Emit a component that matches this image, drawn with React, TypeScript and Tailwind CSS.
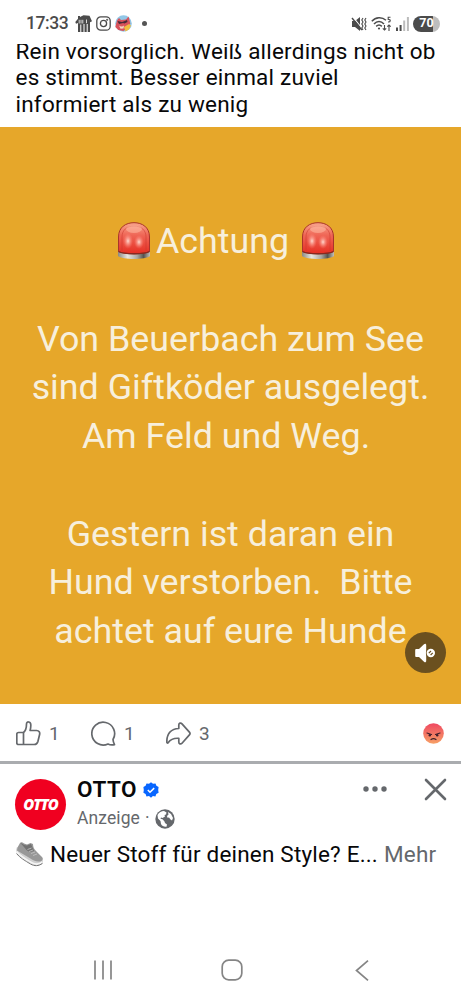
interface IconProps {
  className?: string;
}

const postLines = [
  'Rein vorsorglich. Weiß allerdings nicht ob',
  'es stimmt. Besser einmal zuviel',
  'informiert als zu wenig',
];

const warningLines = [
  '',
  'Von Beuerbach zum See',
  'sind Giftköder ausgelegt.',
  'Am Feld und Weg. ',
  '',
  'Gestern ist daran ein',
  'Hund verstorben.  Bitte',
  'achtet auf eure Hunde',
];

function Siren({ className }: IconProps) {
  return (
    <svg className={className} viewBox="0 0 34 38" fill="none">
      <defs>
        <linearGradient id="dome" x1="0" y1="0" x2="0" y2="1">
          <stop offset="0" stopColor="#f9a58c" />
          <stop offset="0.4" stopColor="#ef6656" />
          <stop offset="1" stopColor="#e62e23" />
        </linearGradient>
        <linearGradient id="base" x1="0" y1="0" x2="1" y2="0">
          <stop offset="0" stopColor="#8b8982" />
          <stop offset="0.3" stopColor="#e8e6e1" />
          <stop offset="0.6" stopColor="#aaa8a2" />
          <stop offset="0.8" stopColor="#55534f" />
          <stop offset="1" stopColor="#c4c1ba" />
        </linearGradient>
        <radialGradient id="glow">
          <stop offset="0" stopColor="#ffd9cf" />
          <stop offset="1" stopColor="#ff8273" stopOpacity="0" />
        </radialGradient>
      </defs>
      <path d="M1 29v5c4 4 28 4 32 0v-5z" fill="url(#base)" />
      <path d="M1.500 29.500V15C1.500 5 9 .7 17 .7S32.500 5 32.500 15v14.500c-5 3-26 3-31 0z" fill="url(#dome)" stroke="#a9342a" strokeWidth="1" />
      <path d="M5 29V15c0-7 5-11 12-11s12 4 12 11v14" stroke="#c9362c" strokeOpacity=".5" />
      <ellipse cx="17" cy="7" rx="8" ry="4" fill="#ffc0a8" fillOpacity=".5" />
      <ellipse cx="11" cy="19" rx="5" ry="8" fill="url(#glow)" />
      <ellipse cx="22" cy="20" rx="5" ry="7" fill="url(#glow)" />
      <path d="M1.500 29.500c5 3 26 3 31 0" stroke="#87291f" strokeWidth="1.300" />
    </svg>
  );
}

function StatusBar() {
  return (
    <div className="flex h-11 shrink-0 items-center pr-[21px] pl-[26px] pt-[3px] text-[#4b4b4b]">
      <span className="w-[42px] text-[17.500px] leading-none font-medium tracking-[-0.4px]">17:33</span>

      {/* Notifications */}
      <svg className="ml-[7px] h-[17px] w-[17px]" viewBox="0 0 17 17" fill="currentColor">
        <path d="M.3 7 3 3.800V1h2v1L8.500.3 14.500.8 17 6.300l-2 .9V17h-2.300V9h-1v8H9.500V9h-1v8H6.300V9.500h-1V17H3V8l-2 .7z" />
        <path d="M4.200 4.800v3.700M6 4.800v3.700M7.800 4.800v3.700M11.500 8.200V4.500" stroke="#fff" strokeWidth=".8" fill="none" />
      </svg>
      <svg className="ml-[4px] h-[15px] w-[15px]" viewBox="0 0 15 15" fill="none" stroke="currentColor" strokeWidth="1.300">
        <rect x=".8" y=".8" width="13.400" height="13.400" rx="4" />
        <circle cx="7.500" cy="7.500" r="3.100" />
        <circle cx="11.200" cy="3.800" r=".4" />
      </svg>
      <svg className="ml-[4px] h-[17px] w-[17px]" viewBox="0 0 17 17">
        <circle cx="8.500" cy="8.500" r="8.300" fill="#91c7e7" />
        <path d="M2 5.500 4 3l2 2 5-.5 2.500-3 .8 3 1 4-3 5-4 2.500-5-1-3-3z" fill="#d9525b" />
        <path d="m2.500 6 4.500 1 1.500-.5 3.500-1.500.5 2-3 1.500L8 8 4 9z" fill="#482a36" />
        <path d="M4 10.500c2 1.500 4 1 5 0l-.5 3-3 .3z" fill="#f4d7c1" />
        <path d="m9 12 5-3 2 1.500-2 4-3.500 2z" fill="#f1bd40" />
      </svg>
      <span className="ml-[10px] h-[5px] w-[5px] rounded-full bg-[#555]" />

      {/* System state */}
      <svg className="ml-auto h-[16px] w-[17px]" viewBox="0 0 17 16" fill="none" stroke="currentColor" strokeWidth="1.400">
        <path d="M1 5h3l5-4v14l-5-4H1z" fill="currentColor" stroke="none" />
        <path d="M2 1 12 13.500" stroke="#fff" strokeWidth="1.200" />
        <path d="M1 2 10.800 14" />
        <path d="m12 2-1.200 2L12 6l-1.200 2L12 10l-1.200 2L12 14M15 2l-1.200 2L15 6l-1.200 2L15 10l-1.200 2L15 14" strokeWidth="1.100" />
      </svg>
      <svg className="ml-[3px] h-[16px] w-[21px]" viewBox="0 0 21 16" fill="none" stroke="currentColor" strokeWidth="1.500">
        <path d="M.8 5.200C4.800.8 11 .8 15 4.200M3 8c3-3.200 7-3.200 10 0M5.200 10.400c1.800-1.800 3.800-1.800 5.600 0" />
        <circle cx="8" cy="12.500" r="1.100" fill="currentColor" stroke="none" />
        <path d="M19.500 1.200h-2.300v2.200c2.800-.3 2.800 2.700-.2 2.600M13.500 9v5m-1.700-1.700L13.500 14l1.700-1.700M18 15V9m-1.700 1.700L18 9l1.700 1.700" strokeWidth="1.100" />
      </svg>
      <svg className="ml-[4px] h-[14px] w-[13px]" viewBox="0 0 13 14" fill="currentColor">
        <path d="M0 10.500h2V14H0zM3.600 8h2v6h-2z" />
        <path d="M7.200 3.500h2V14h-2zM10.900 0h2v14h-2z" fill="#bbb" />
      </svg>
      <div className="ml-[4px] flex h-4 w-[27px] items-center justify-center rounded-full bg-linear-to-r from-[#4b4b4b] from-75% to-[#bdbdbd] to-75% text-[12.500px] leading-none font-bold text-white">
        70
      </div>
    </div>
  );
}

function PostActions() {
  return (
    <div className="flex h-[57px] shrink-0 items-center pr-[17px] pl-4 pt-px text-[19px] leading-none tracking-[0.2px] text-[#65686c]">
      <div className="flex w-[75px] items-center gap-2">
        <svg className="h-[25px] w-[25px]" viewBox="0 0 25 25" fill="none" stroke="currentColor" strokeWidth="1.700" strokeLinejoin="round">
          <path d="M7.500 11.500c2.500-2 3-4.500 3-8.500 0-3 4.100-2.600 4.300.7.100 2-.2 3.800-.7 5.800h6.500c2.500 0 3.500 1.800 3 4l-1.700 7c-.6 2.200-1.500 3-3.700 3H7.500M2.500 11.500h5v12h-5c-1 0-1.700-.6-1.700-1.600v-8.800c0-1 .7-1.600 1.700-1.600z" />
        </svg>
        <span>1</span>
      </div>
      <div className="flex w-[75px] items-center gap-2">
        <svg className="h-[25px] w-[25px]" viewBox="0 0 25 25" fill="none" stroke="currentColor" strokeWidth="1.700" strokeLinejoin="round">
          <path d="M22 18.500A11.400 11.400 0 1 0 17 23c1.800 1 4 1.200 6.500.7-.8-1.500-1.300-3-1.500-5.200z" />
        </svg>
        <span>1</span>
      </div>
      <div className="flex items-center gap-2">
        <svg className="h-[25px] w-[25px]" viewBox="0 0 25 25" fill="none" stroke="currentColor" strokeWidth="1.700" strokeLinejoin="round">
          <path d="M12.800 7.500V4c0-2 1.900-2.600 3.200-1.200l7.400 8.300c.8.900.8 1.900 0 2.800L16 22.200c-1.300 1.400-3.200.8-3.200-1.200v-3.700c-4.500-.3-8.300 1-10.500 4.200-.6.900-1.500.6-1.500-.5C.8 13 5 8 12.800 7.500z" />
        </svg>
        <span>3</span>
      </div>

      {/* Angry reaction */}
      <svg className="ml-auto h-[21px] w-[21px]" viewBox="0 0 21 21" fill="none">
        <defs>
          <linearGradient id="angry" x1="0" y1="0" x2="0" y2="1">
            <stop stopColor="#ef4861" />
            <stop offset="1" stopColor="#f7a066" />
          </linearGradient>
        </defs>
        <circle cx="10.500" cy="10.500" r="10.300" fill="url(#angry)" />
        <path d="m4 10 4.500 1.500M17 10l-4.500 1.500M8 16.500c1.600-1 3.400-1 5 0" stroke="#40202c" strokeWidth="1.200" strokeLinecap="round" />
        <circle cx="6.800" cy="12.300" r="1.200" fill="#40202c" />
        <circle cx="14.200" cy="12.300" r="1.200" fill="#40202c" />
      </svg>
    </div>
  );
}

function AdHeader() {
  return (
    <div className="flex h-[75px] shrink-0 pl-[15px]">
      <div className="mt-[15px] flex h-[51px] w-[51px] items-center justify-center rounded-full bg-[#f00020] font-['Open_Sans',sans-serif] text-[15px] leading-none font-extrabold tracking-[-1.1px] text-white italic">
        OTTO
      </div>
      <div className="ml-[11px] pt-[12px]">
        <div className="flex h-[27px] items-center gap-[6px]">
          <span className="text-[22.500px] leading-[27px] font-semibold tracking-[0.500px] text-[#080809]">OTTO</span>
          <svg className="h-[16px] w-[16px]" viewBox="0 0 16 16">
            <path d="m8 .2 2 1.500 2.500-.3.900 2.400 2.200 1.200L15.200 8l.4 2.800-2.300 1.100-.9 2.600-2.500-.4L8 15.800l-2-1.700-2.500.4-.9-2.600-2.200-1.100L.8 8 .4 5l2.200-1.200.9-2.400 2.500.3z" fill="#0866ff" />
            <path d="m4.800 8 2.200 2.300 4.200-4.200" fill="none" stroke="#fff" strokeWidth="1.500" />
          </svg>
        </div>
        <div className="mt-[2px] flex h-[28px] items-center text-[17.500px] leading-none text-[#65686c]">
          <span className="tracking-[0.1px]">Anzeige</span>
          <span className="ml-[5px]">·</span>
          <svg className="ml-[5px] h-5 w-5" viewBox="0 0 20 20">
            <circle cx="10" cy="10" r="9.700" fill="#65686c" />
            <path d="M2.500 6C4 3.300 6.500 2 9 2l2.500 1.500L11 5.500 9.500 6l.5 1.500L7.500 9 6 8.500l-.5 1.300 2 .4 2 2.300.5 1.500 2 1.500-.5 2.200c-2.500.3-4.500-.7-5.500-2.700l-.5-3L3 9.500z" fill="#fff" />
            <path d="m13 3 3 2 2 4-1 2.500-1.500-1-1.500-2-1.500.3-.5-1.800 1.500-1.500z" fill="#fff" />
          </svg>
        </div>
      </div>
      <svg className="mt-[22px] ml-auto h-[6px] w-[24px]" viewBox="0 0 24 6" fill="#65686c">
        <circle cx="3" cy="3" r="2.700" />
        <circle cx="12" cy="3" r="2.700" />
        <circle cx="21" cy="3" r="2.700" />
      </svg>
      <svg className="mt-[14px] mr-[14px] ml-[37px] h-[23px] w-[23px]" viewBox="0 0 23 23" fill="none" stroke="#65686c" strokeWidth="2.600" strokeLinecap="round">
        <path d="m2 2 19 19M21 2 2 21" />
      </svg>
    </div>
  );
}

function AdText() {
  return (
    <div className="flex h-[30px] shrink-0 items-center pl-[15px] text-[22.500px] leading-[30px] whitespace-nowrap text-[#080809]">
      <svg className="h-[26px] w-[29px]" viewBox="0 0 29 26">
        <path d="M2 6c-1.500 3-1 6 1.500 8l12 8.500c4 2.500 9 3 12 0l.5-3L15 16z" fill="#cfcfcf" />
        <path d="M2.500 6.500 5 2c1-1.500 3-.5 4 .5l3 1L15.500 2l2.500 1c0 3 1 5 3 7l5.500 5.500c2 1.700 1.700 4-.5 4.700-4 .8-8-.5-11-3L2 9.500z" fill="#989898" />
        <path d="m5.500 2 6 7c2 2 4.500 2.200 7.500 1l-3-7-4 1.500C10 4.500 8 3 5.500 2z" fill="#727272" />
        <path d="m12.500 8.500 4-1.500M14 10.500l4-1.500M16 12.500l4-1.500M18 14.500l4-1.500" stroke="#c6c6c6" strokeWidth=".8" />
        <path d="M1.500 10.500c4 5 10 8 14 10.500s8 3 12-.2" fill="none" stroke="#f5f5f5" strokeWidth="1.700" />
        <path d="M1.500 12.500c3 4 9 7.500 14 10.500 4 2.300 8 2.300 12-.7" fill="none" stroke="#777" />
      </svg>
      <span className="ml-[6px] tracking-[0.190px]">Neuer Stoff für deinen Style? E...</span>
      <span className="ml-[6px] tracking-[0.200px] text-[#65686c]">Mehr</span>
    </div>
  );
}

function NavigationBar() {
  return (
    <div className="mt-auto flex h-[60px] shrink-0 items-center pl-[93px]">
      <svg className="h-[20px] w-[20px]" viewBox="0 0 20 20" stroke="#858585" strokeWidth="1.700">
        <path d="M2 .5v19M10 .5v19M18 .5v19" />
      </svg>
      <svg className="ml-[108px] h-[22px] w-[22px]" viewBox="0 0 22 22" fill="none" stroke="#858585" strokeWidth="1.700">
        <rect x="1.200" y="1.200" width="19.600" height="19.600" rx="6.500" />
      </svg>
      <svg className="ml-[112px] h-[21px] w-[14px]" viewBox="0 0 14 21" fill="none" stroke="#858585" strokeWidth="1.700">
        <path d="M13 .7 1.500 10.500 13 20.300" />
      </svg>
    </div>
  );
}

export default function App() {
  return (
    <div className="flex h-[1000px] w-[461px] flex-col overflow-hidden bg-white font-['Roboto',sans-serif]">
      <StatusBar />

      <div className="h-[83px] shrink-0 overflow-hidden pl-[15.500px] text-[22.500px] leading-[26.500px] tracking-[0.220px] whitespace-nowrap text-[#080809]">
        <div className="-mt-[6.500px]">
          {postLines.map((line) => (
            <p key={line}>{line}</p>
          ))}
        </div>
      </div>

      <div className="relative h-[577px] shrink-0 bg-[#e6a72a] pt-[90px] text-center text-[35.800px] leading-[48.750px] whitespace-pre text-[#f7efdc]">
        <div className="flex h-[48.750px] items-center pl-[117px]">
          <Siren className="h-[38px] w-[34px]" />
          <span className="ml-[5px]">Achtung</span>
          <Siren className="ml-[12px] h-[38px] w-[34px]" />
        </div>
        {warningLines.map((line, index) => (
          <p key={index} className="h-[48.750px]">{line}</p>
        ))}
        <button className="absolute right-[15px] bottom-[31px] flex h-[41px] w-[41px] items-center justify-center rounded-full bg-[#6b501f]">
          <svg className="h-[20px] w-[21px]" viewBox="0 0 21 20" fill="#fff">
            <path d="M1.500 6H4l5-4.700c1.200-1 2.200-.5 2.200 1v15.400c0 1.500-1 2-2.200 1L4 14H1.500C.6 14 .2 13.500.2 12.700V7.300C.2 6.500.6 6 1.500 6z" />
            <circle cx="15.800" cy="10" r="4.900" fill="#6b501f" />
            <circle cx="15.800" cy="10" r="4.200" />
            <path d="m13.800 10.200 2.200-2.200M15.600 12l2.200-2.200" stroke="#6b501f" strokeWidth="1.200" />
          </svg>
        </button>
      </div>

      <PostActions />
      <div className="h-[3px] shrink-0 bg-[#aaacaf]" />
      <AdHeader />
      <AdText />
      <NavigationBar />
    </div>
  );
}
